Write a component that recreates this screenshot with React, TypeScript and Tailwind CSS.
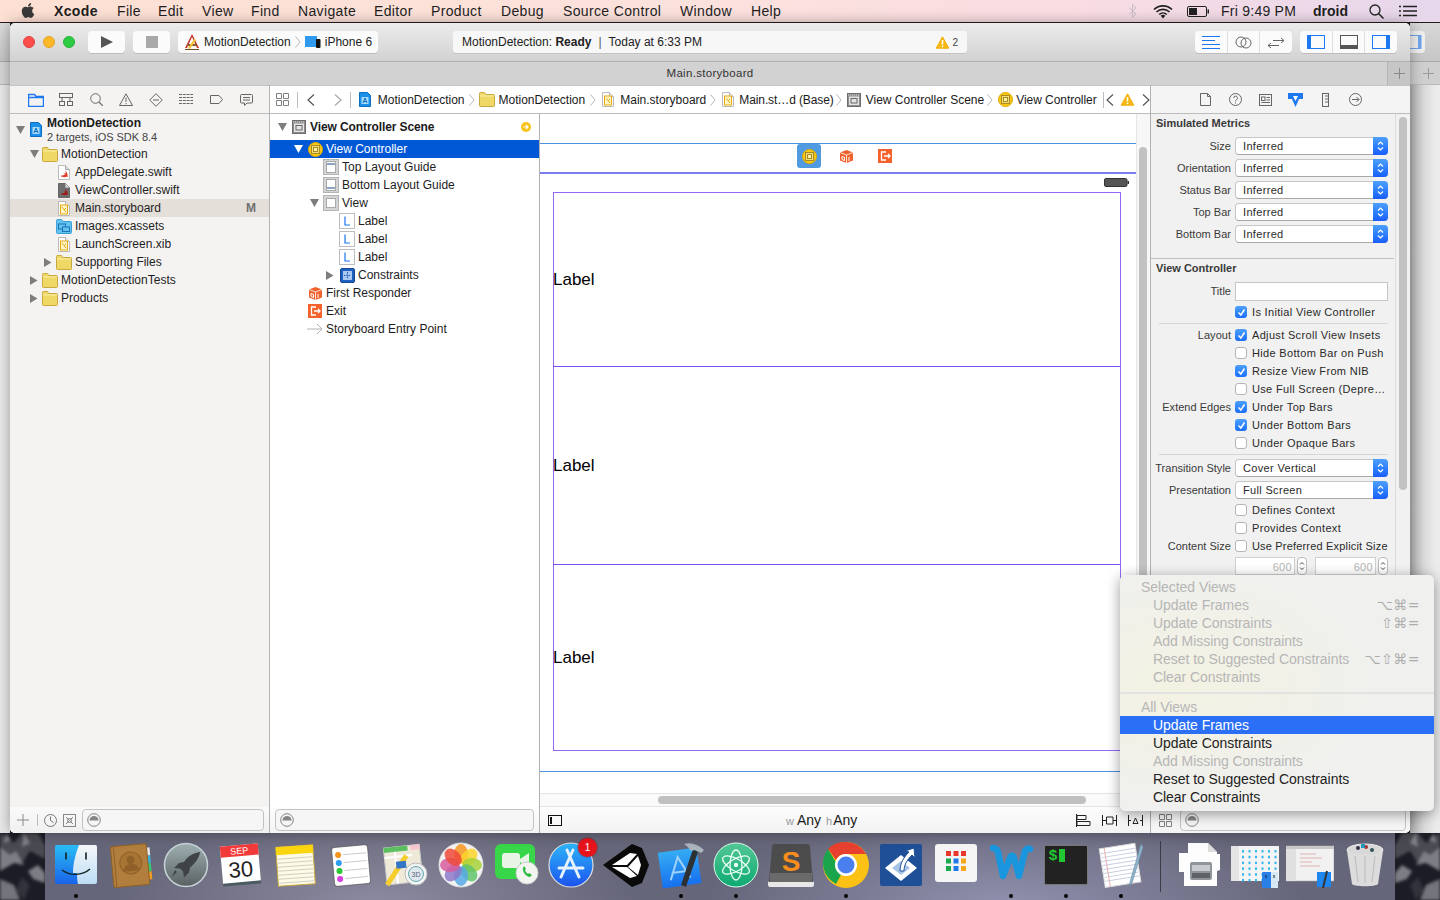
import React from "react";
import { FaApple } from "react-icons/fa";

type P = { className?: string };
const Svg = ({ w, h, vb, children, className = "" }: { w: number; h: number; vb?: string; children: React.ReactNode; className?: string }) => (
  <svg width={w} height={h} viewBox={vb ?? `0 0 ${w} ${h}`} fill="none" className={`shrink-0 ${className}`}>{children}</svg>
);

/* ---------- small file icons ---------- */
const Disc = ({ dir }: { dir?: "down" | "right" }) => (
  <div className="w-[8px] h-[8px] flex items-center justify-center shrink-0">
    {dir === "down" && <Svg w={9} h={8}><path d="M0 0h9L4.5 8z" fill="#7d7d7d" /></Svg>}
    {dir === "right" && <Svg w={8} h={9}><path d="M0 0v9l7.5-4.5z" fill="#7d7d7d" /></Svg>}
  </div>
);
const Folder = () => (
  <Svg w={16} h={15}><path d="M.5 3.500V1.500a1 1 0 0 1 1-1h4l1.500 2h7.500a1 1 0 0 1 1 1v10a1 1 0 0 1-1 1h-13a1 1 0 0 1-1-1z" fill="#efd866" stroke="#c9a93f" /><path d="M1 4h14" stroke="#fbeea8" /></Svg>
);
const BlueFolder = () => (
  <Svg w={16} h={15}><path d="M.5 3.500V1.500a1 1 0 0 1 1-1h4l1.500 2h7.500a1 1 0 0 1 1 1v10a1 1 0 0 1-1 1h-13a1 1 0 0 1-1-1z" fill="#62c3ee" stroke="#3a9fd6" /><rect x="2.500" y="5" width="7" height="5" fill="none" stroke="#1d6fb8" /><rect x="6.500" y="8" width="7" height="4.500" fill="#62c3ee" stroke="#1d6fb8" /></Svg>
);
const Swift = ({ dark }: { dark?: boolean }) => (
  <Svg w={12} h={15}><path d="M.5.5h7l4 4v10H.5z" fill={dark ? "#6f6f6f" : "#fff"} stroke={dark ? "#666" : "#bbb"} /><path d="M7.5.5v4h4" fill="#ddd" stroke="#aaa" /><path d="M2.5 11c2 1.5 5 1.5 6.500.5.5.5 1 .5 1 .5-.3-1-.5-1.500-.5-2.500 0-1.500-1-3-2.500-3.500 1 1.500.5 3 .5 3-1-.5-2-1.500-2.500-2 .5 1 1.500 2 2 2.800-1 .5-2.500.7-4.500 1.200z" fill={dark ? "#a01818" : "#e23b2a"} /></Svg>
);
const Board = () => (
  <Svg w={12} h={15}><path d="M.5.5h7l4 4v10H.5z" fill="#fff" stroke="#b9b9b9" /><path d="M7.500.5v4h4" fill="#eee" stroke="#b9b9b9" /><rect x="2.500" y="4" width="7" height="9" fill="#fff5c8" stroke="#e8a90c" /><path d="M4 6l4 5M8 7l-2 2" stroke="#e8a90c" /></Svg>
);
const ProjectIcon = () => (
  <Svg w={12} h={15}><path d="M.5.5h8l3 3v11H.5z" fill="#1a90ea" stroke="#0d6fc0" /><path d="M2.500 5h7v7h-7z" fill="#a9daf8" /><path d="M4 11l2-5 2 5M4.800 9.500h2.400" stroke="#0d6fc0" /></Svg>
);
const VCIcon = () => (
  <Svg w={15} h={15}><circle cx="7.500" cy="7.500" r="7" fill="#f8c816" stroke="#e0a800" /><rect x="3.500" y="3.500" width="8" height="8" fill="#f5df78" stroke="#a98a20" /><rect x="5.500" y="5.500" width="4" height="4" fill="#fff2a8" stroke="#a98a20" /></Svg>
);
const Cube = () => (
  <Svg w={15} h={15}><path d="M7.500 1L14 3.500v8L7.500 14 1 11.500v-8z" fill="#f2622e" /><path d="M1 3.500L7.500 6 14 3.500M7.500 6v8" stroke="#fff" strokeWidth=".8" /><path d="M10 8v4M3 7.500v3l2.500 1v-3z" stroke="#fff" strokeWidth="1" /></Svg>
);
const ExitIcon = () => (
  <Svg w={14} h={14}><rect width="14" height="14" fill="#f6622c" /><path d="M8 3H3.500v8H8M6 7h6M10 5l2 2-2 2" stroke="#fff" strokeWidth="1.300" /></Svg>
);
const SceneIcon = () => (
  <Svg w={14} h={14}><rect x=".5" y=".5" width="13" height="13" fill="#8c8c8c" stroke="#6d6d6d" /><rect x="2" y="3.500" width="10" height="8.500" fill="#e4e4e4" /><rect x="4" y="5.500" width="6" height="4.500" fill="#e4e4e4" stroke="#666" /><path d="M1 2h12" stroke="#ddd" strokeDasharray="1 1" /></Svg>
);
const GuideIcon = ({ bottom }: { bottom?: boolean }) => (
  <Svg w={16} h={16}><rect x=".5" y=".5" width="15" height="15" fill="#d4d4d4" stroke="#b5b5b5" /><rect x="3.500" y="2.500" width="9" height="11" fill="#fff" stroke="#aaa" /><path d={bottom ? "M4 11h8" : "M4 5h8"} stroke="#1c4f80" strokeWidth="1.200" /></Svg>
);
const ViewIcon = () => (
  <Svg w={16} h={16}><rect x=".5" y=".5" width="15" height="15" fill="#d4d4d4" stroke="#b5b5b5" /><rect x="3.500" y="3.500" width="9" height="9" fill="#fff" stroke="#aaa" /></Svg>
);
const LabelIcon = () => (
  <Svg w={16} h={16}><rect x=".5" y=".5" width="15" height="15" fill="#fff" stroke="#bdbdbd" /><path d="M6 3.500v8.500h5" stroke="#1877f2" strokeWidth="1.200" /></Svg>
);
const ConstraintsIcon = () => (
  <Svg w={15} h={15}><rect x=".5" y=".5" width="14" height="14" rx="1.500" fill="#1f5fbf" stroke="#164a96" /><rect x="3" y="3" width="9" height="9" fill="#a9c8f0" /><path d="M7.500 4v7M4 7.500h7" stroke="#1f5fbf" strokeDasharray="1.500 .8" /></Svg>
);
const EntryArrow = () => (
  <Svg w={16} h={12}><path d="M0 6h15M10 1l5 5-5 5" stroke="#b4b4b4" /></Svg>
);
const Warn = ({ s = 13 }: { s?: number }) => (
  <Svg w={s} h={s} vb="0 0 13 13"><path d="M6.500.8L12.800 12.200H.2z" fill="#f7b916" stroke="#f2ac05" strokeLinejoin="round" /><path d="M6.500 4v4.500" stroke="#fff" strokeWidth="1.500" /><circle cx="6.500" cy="10.300" r=".9" fill="#fff" /></Svg>
);
const Chev = ({ className = "" }: P) => (
  <Svg w={6} h={12} className={className}><path d="M.5.5L5 6 .5 11.500" stroke="#b7b7b7" /></Svg>
);

/* ---------- toolbar ---------- */
const Light = ({ c }: { c: string }) => <div className={`w-[12px] h-[12px] rounded-full border ${c}`} />;
const TbBtn = ({ className = "", children }: P & { children?: React.ReactNode }) => (
  <div className={`h-[22px] bg-[#fbfbfb] rounded-[4px] shadow-[0_1px_0_#bdbdbd] flex items-center shrink-0 ${className}`}>{children}</div>
);
const Seg = ({ children, last }: { children: React.ReactNode; last?: boolean }) => (
  <div className={`flex-1 h-full flex items-center justify-center ${last ? "" : "border-r border-[#dedede]"}`}>{children}</div>
);

/* ---------- tree rows ---------- */
const NavRow = ({ pl, dir, icon, label, hl }: { pl: string; dir?: "down" | "right"; icon: React.ReactNode; label: string; hl?: boolean }) => (
  <div className={`h-[18px] flex items-center ${pl} ${hl ? "bg-[#e5dfd9]" : ""}`}>
    <Disc dir={dir} />
    <div className="w-[16px] ml-[4px] flex justify-center shrink-0">{icon}</div>
    <span className="ml-[3px] text-[#1d1d1d]">{label}</span>
    {hl && <span className="ml-auto mr-[13px] font-bold text-[#707070]">M</span>}
  </div>
);
const OutRow = ({ pl, dir, icon, label }: { pl: string; dir?: "down" | "right"; icon: React.ReactNode; label: string }) => (
  <div className={`h-[18px] flex items-center ${pl}`}>
    <Disc dir={dir} />
    <div className="w-[16px] ml-[5px] flex justify-center shrink-0">{icon}</div>
    <span className="ml-[3px] text-[#1d1d1d]">{label}</span>
  </div>
);

/* ---------- inspector ---------- */
const Row = ({ label, children, className = "" }: { label?: string; children: React.ReactNode; className?: string }) => (
  <div className={`h-[18px] flex items-center ${className}`}>
    <div className="w-[80px] text-right text-[#3a3a3a] whitespace-nowrap tracking-[0.02px]">{label}</div>
    <div className="ml-[4px] flex items-center">{children}</div>
  </div>
);
const Select = ({ v }: { v: string }) => (
  <div className="w-[153px] h-[18px] flex bg-white rounded-[4px] border border-[#c6c6c6] border-b-[#a8a8a8]">
    <span className="flex-1 pl-[7px] leading-[16px] text-[#2a2a2a]">{v}</span>
    <div className="-my-px -mr-px w-[15px] rounded-r-[4px] bg-gradient-to-b from-[#4da0fb] to-[#1b5cfb] flex items-center justify-center">
      <Svg w={7} h={12}><path d="M1 4.500L3.500 2 6 4.500M1 7.500L3.500 10 6 7.500" stroke="#fff" strokeWidth="1.200" /></Svg>
    </div>
  </div>
);
const Check = ({ on, label, tight }: { on?: boolean; label: string; tight?: boolean }) => (
  <div className="flex items-center">
    {on ? (
      <div className="w-[12px] h-[12px] rounded-[3px] bg-gradient-to-b from-[#4da0fb] to-[#1b6efb] flex items-center justify-center">
        <Svg w={9} h={9}><path d="M1.500 4.500L3.800 7 7.500 1.500" stroke="#fff" strokeWidth="1.500" /></Svg>
      </div>
    ) : (
      <div className="w-[12px] h-[12px] rounded-[3px] bg-white border border-[#b5b5b5]" />
    )}
    <span className={`ml-[5px] text-[#2a2a2a] whitespace-nowrap ${tight ? "tracking-[0.18px]" : ""}`}>{label}</span>
  </div>
);
const Stepper = () => (
  <div className="w-[10px] h-[18px] rounded-[4px] bg-white border border-[#bbb] flex items-center justify-center">
    <Svg w={6} h={12}><path d="M1 4.500L3 2.500l2 2M1 7.500l2 2 2-2" stroke="#444" /></Svg>
  </div>
);
const Filter = ({ className = "" }: P) => (
  <div className={`h-[22px] rounded-[4px] border border-[#c2c2c2] bg-[#f6f6f6] flex items-center pl-[4px] ${className}`}>
    <FilterGlyph />
  </div>
);
const FilterGlyph = () => (
  <Svg w={14} h={14}><circle cx="7" cy="7" r="6.300" stroke="#858585" /><path d="M2.500 7.500a4.500 4.500 0 0 1 9 0z" fill="#858585" /></Svg>
);
const GridGlyph = () => (
  <Svg w={13} h={13}><path d="M.5.5h5v5h-5zM7.500.5h5v5h-5zM.5 7.500h5v5h-5zM7.500 7.500h5v5h-5z" stroke="#808080" /></Svg>
);

/* ---------- dock ---------- */
const Finder = () => (
  <Svg w={48} h={48}>
    <defs><linearGradient id="fa" x1="0" y1="0" x2="0" y2="1"><stop stopColor="#29bdf6" /><stop offset="1" stopColor="#1a63e8" /></linearGradient>
      <linearGradient id="fb" x1="0" y1="0" x2="0" y2="1"><stop stopColor="#f6f8fa" /><stop offset="1" stopColor="#bcdcf5" /></linearGradient></defs>
    <rect x="3" y="4" width="42" height="39" rx="2" fill="url(#fa)" />
    <path d="M27 4h16a2 2 0 0 1 2 2v35a2 2 0 0 1-2 2H26c-1-4-1-8-1-11h-4c0-10 3-20 6-28z" fill="url(#fb)" />
    <path d="M14 12v6M34 12v6" stroke="#122" strokeWidth="1.600" strokeLinecap="round" />
    <path d="M10 29c8 6 20 6 28-1" stroke="#122" strokeWidth="1.400" />
  </Svg>
);
const Contacts = () => (
  <Svg w={48} h={48}>
    <g transform="rotate(-5 24 24)">
      <rect x="40" y="8" width="4" height="8" fill="#e6e6e6" /><rect x="40" y="16" width="4" height="8" fill="#3bb0d8" /><rect x="40" y="24" width="4" height="8" fill="#3dc26c" /><rect x="40" y="32" width="4" height="8" fill="#f09a24" />
      <rect x="5" y="4" width="36" height="41" rx="2" fill="#b17e3e" stroke="#8f6128" />
      <path d="M8 4.500v40" stroke="#8f6128" />
      <circle cx="24" cy="22" r="11" fill="#a87434" stroke="#8f6128" />
      <circle cx="24" cy="19" r="4" fill="#8f6128" /><path d="M16 30c1-6 4-7 8-7s7 1 8 7" fill="#8f6128" />
    </g>
  </Svg>
);
const Launchpad = () => (
  <Svg w={48} h={48}>
    <defs><linearGradient id="lp" x1="0" y1="0" x2="0" y2="1"><stop stopColor="#9fb0b2" /><stop offset="1" stopColor="#596062" /></linearGradient></defs>
    <circle cx="24" cy="24" r="21.500" fill="url(#lp)" stroke="#c6d4d6" strokeWidth="1.500" />
    <path d="M38 11c-7 1-12 4-16 10l-5 1-5 5 6 .5 3 3 1 6 5-5 1-5c5-4 9-9 10-15z" fill="#3f4345" />
    <path d="M15 31l-5 5 3-7z" fill="#3f4345" />
  </Svg>
);
const Calendar = () => (
  <Svg w={48} h={48}>
    <g transform="rotate(-5 24 24)">
      <rect x="4.500" y="6" width="38" height="38" fill="#4a5a60" />
      <rect x="4.500" y="4" width="38" height="37" fill="#fff" />
      <rect x="4.500" y="4" width="38" height="11" fill="#f23a3a" />
      <text x="23.500" y="13" textAnchor="middle" fontSize="9" fill="#fff" fontFamily="Liberation Sans">SEP</text>
      <text x="23.500" y="36" textAnchor="middle" fontSize="22" fill="#222" fontFamily="Liberation Sans">30</text>
    </g>
  </Svg>
);
const Notes = () => (
  <Svg w={48} h={48}>
    <g transform="rotate(-4 24 24)">
      <rect x="5" y="5" width="37" height="39" fill="#fdfbe6" stroke="#c9a83c" />
      <rect x="5" y="5" width="37" height="8" fill="#fbd50f" />
      {[17, 21, 25, 29, 33, 37, 41].map((y) => <path key={y} d={`M6 ${y}h35`} stroke="#cfcfc6" />)}
    </g>
  </Svg>
);
const Reminders = () => (
  <Svg w={48} h={48}>
    <g transform="rotate(-5 24 24)">
      <rect x="6" y="5" width="36" height="39" rx="3" fill="#fff" stroke="#444" strokeOpacity=".6" />
      {[["#f7941e", 13], ["#2d9df4", 21], ["#2bc834", 29], ["#d73ee0", 37]].map(([c, y]) => (
        <g key={String(y)}><circle cx="12" cy={y as number} r="3" fill={c as string} /><path d={`M17 ${y}h23`} stroke="#ccc" /></g>
      ))}
    </g>
  </Svg>
);
const Maps = () => (
  <Svg w={48} h={48}>
    <g transform="rotate(-6 22 22)">
      <rect x="3" y="5" width="36" height="37" fill="#efe9d8" stroke="#ccc" />
      <rect x="3" y="5" width="24" height="5" fill="#5cc060" />
      <rect x="30" y="5" width="9" height="5" fill="#f8c8d0" />
      <path d="M3 15h28M14 10v32" stroke="#fff" strokeWidth="2" />
      <path d="M3 42L25 15" stroke="#f5cd2c" strokeWidth="5" />
      <rect x="14" y="20" width="10" height="7" fill="#3575c8" />
    </g>
    <circle cx="34" cy="33" r="11" fill="#f3f5f5" stroke="#bbb" />
    <circle cx="34" cy="33" r="7.500" fill="#dfe8ee" stroke="#6aa" />
    <text x="34" y="36" textAnchor="middle" fontSize="7" fill="#567" fontFamily="Liberation Sans">3D</text>
  </Svg>
);
const Photos = () => {
  const cs = ["#f7941e", "#fbd42a", "#a7d238", "#5fc46a", "#57a9e6", "#8e77c8", "#d85c9e", "#ee4a3a"];
  return (
    <Svg w={48} h={48}>
      <circle cx="24" cy="24" r="22" fill="#f4f4f4" stroke="#ddd" />
      {cs.map((c, i) => <ellipse key={c} cx="24" cy="13" rx="7" ry="10" fill={c} opacity=".85" transform={`rotate(${i * 45} 24 24)`} />)}
      <circle cx="24" cy="24" r="1.500" fill="#fff" />
    </Svg>
  );
};
const FaceTime = () => (
  <Svg w={48} h={48}>
    <rect x="3" y="3" width="40" height="35" rx="6" fill="#38d649" />
    <rect x="10" y="12" width="18" height="15" rx="3" fill="#e8f5e6" />
    <path d="M28 18l9-6v15l-9-6z" fill="#e8f5e6" />
    <circle cx="35" cy="32" r="11" fill="#f2f5f0" stroke="#ccc" />
    <path d="M31 27c-1 3 3 9 7 9l2-2-3-2-1 1c-1-.5-3-3-3-4l1-1-2-3z" fill="#2cbb40" />
  </Svg>
);
const AppStore = () => (
  <Svg w={48} h={48}>
    <defs><linearGradient id="as" x1="0" y1="0" x2="0" y2="1"><stop stopColor="#2db6f8" /><stop offset="1" stopColor="#1b52ee" /></linearGradient></defs>
    <circle cx="24" cy="24" r="22" fill="url(#as)" stroke="#ddd" strokeWidth="1.200" />
    <path d="M26 9l-12 27M20 9l12 27M12 27h24" stroke="#e6f2fd" strokeWidth="3" strokeLinecap="round" />
  </Svg>
);
const Unity = () => (
  <Svg w={48} h={48}>
    <path d="M1 24L30 3l10 4 7 17-7 18-10 4z" fill="#0a0a0a" />
    <path d="M10 24l18-12 7 1-10 11zM26 26l10-11 3 9-3 10z M10 26h15l10 9-7 2z" fill="#fff" />
  </Svg>
);
const XcodeIcon = () => (
  <Svg w={48} h={48}>
    <defs><linearGradient id="xc" x1="0" y1="0" x2="0" y2="1"><stop stopColor="#35acf4" /><stop offset="1" stopColor="#1670ef" /></linearGradient></defs>
    <g transform="rotate(-8 22 26)"><rect x="3" y="9" width="39" height="36" fill="url(#xc)" />
      <path d="M12 38L22 16l10 22M14 31h17" stroke="#9fd2fa" strokeWidth="2" /></g>
    <path d="M36 8L24 44l5 2L41 11z" fill="#2c3136" />
    <path d="M27 3c6-2 14 0 20 6l-3 3-6-3-4 1c-2-3-4-5-7-7z" fill="#a9b4bb" />
  </Svg>
);
const Atom = () => (
  <Svg w={48} h={48}>
    <defs><linearGradient id="at" x1="0" y1="0" x2="0" y2="1"><stop stopColor="#53c796" /><stop offset="1" stopColor="#0eaa72" /></linearGradient></defs>
    <circle cx="24" cy="24" r="22" fill="url(#at)" stroke="#dfe" strokeWidth="1" />
    <g stroke="#eafff5" strokeWidth="1.300" fill="none">
      <ellipse cx="24" cy="24" rx="15" ry="6" transform="rotate(30 24 24)" />
      <ellipse cx="24" cy="24" rx="15" ry="6" transform="rotate(-30 24 24)" />
      <ellipse cx="24" cy="24" rx="15" ry="6" transform="rotate(90 24 24)" />
    </g>
    <circle cx="24" cy="24" r="2.200" fill="#eafff5" />
  </Svg>
);
const Sublime = () => (
  <Svg w={48} h={48}>
    <rect x="1" y="40" width="46" height="6" rx="2" fill="#e8e8e8" />
    <path d="M5 6a3 3 0 0 1 3-3h32a3 3 0 0 1 3 3l3 35H2z" fill="#4c4c4c" />
    <rect x="3" y="32" width="42" height="9" fill="#6a6a6a" />
    <text x="24" y="30" textAnchor="middle" fontSize="28" fontWeight="700" fill="#f98e1c" fontFamily="Liberation Sans">S</text>
  </Svg>
);
const Chrome = () => (
  <Svg w={48} h={48}>
    <circle cx="24" cy="24" r="23" fill="#fbc115" />
    <path d="M24 1a23 23 0 0 1 20 12H24a11 11 0 0 0-10 6L6 8A23 23 0 0 1 24 1z" fill="#e8402f" />
    <path d="M6 8l9 15c1 3 3 6 6 7l-7 13A23 23 0 0 1 6 8z" fill="#1aa54d" />
    <circle cx="24" cy="24" r="11" fill="#fff" />
    <circle cx="24" cy="24" r="8.500" fill="#4a7ff0" />
  </Svg>
);
const BlueApp = () => (
  <Svg w={48} h={48}>
    <rect x="3" y="3" width="42" height="42" rx="2" fill="#1f4f96" />
    <path d="M24 14L8 27l16 13 16-13z" fill="#fff" />
    <path d="M24 20l-9 7 9 7 9-7z" fill="#a8c4e6" />
    <path d="M23 30c0-8 4-14 9-19l-4-1 9-3 1 10-3-3c-4 4-8 9-8 16z" fill="#fff" stroke="#1f4f96" />
  </Svg>
);
const GridApp = () => {
  const cols = ["#e8392c", "#e8392c", "#e8392c", "#1ba94c", "#1f7ae8", "#f7a51a", "#1ba94c", "#1f7ae8", "#f7a51a"];
  return (
    <Svg w={48} h={48}>
      <rect x="3" y="3" width="42" height="38" rx="3" fill="#f5f5f5" />
      {cols.map((c, i) => <rect key={i} x={14 + (i % 3) * 7.500} y={10 + Math.floor(i / 3) * 7.500} width="5" height="5" fill={c} />)}
    </Svg>
  );
};
const Word = () => (
  <Svg w={48} h={48}>
    <path d="M6 7c2 0 4 1 5 4l5 24 7-18c1-3 3-3 4 0l5 18 6-25c1-2 3-3 5-2" stroke="#1996dd" strokeWidth="6.500" strokeLinecap="round" strokeLinejoin="round" />
  </Svg>
);
const Terminal = () => (
  <div className="w-[44px] h-[40px] mt-[4px] rounded-[2px] bg-[#222] border border-[#777] flex items-start pl-[4px] pt-[3px]">
    <span className="text-[#21c733] text-[15px] font-bold leading-[15px] font-['Liberation_Mono',monospace]">$</span>
    <span className="w-[6px] h-[13px] bg-[#21c733] ml-px" />
  </div>
);
const TextEdit = () => (
  <Svg w={48} h={48}>
    <g transform="rotate(-9 22 24)">
      <rect x="5" y="5" width="36" height="39" fill="#fff" stroke="#ddd" />
      {[10, 14, 18, 22, 26, 30, 34, 38].map((y) => <path key={y} d={`M6 ${y}h34`} stroke="#c5cfe0" />)}
      <path d="M10 5v39" stroke="#f0b0b0" />
    </g>
    <path d="M44 3l-11 38-1 4 3-3L46 6z" fill="#8fb5d0" stroke="#6a8aa0" strokeWidth=".6" />
  </Svg>
);
const DriveDoc = () => (
  <Svg w={48} h={48}>
    <path d="M12 2h20l9 9v2h3v16l-3 1v15H8V31H3V12h9z" fill="#fdfdfd" />
    <path d="M32 2v9h9z" fill="#ddd" />
    <rect x="14" y="21" width="22" height="18" rx="2" fill="#8f9598" />
    <rect x="16" y="24" width="18" height="6" fill="#c8cccf" />
    <rect x="16" y="32" width="18" height="5" fill="#5e6366" />
  </Svg>
);
const FolderThumb = () => {
  const dots: React.ReactNode[] = [];
  for (let r = 0; r < 6; r++) for (let c = 0; c < 6; c++) dots.push(<rect key={`${r}-${c}`} x={11 + c * 6.500} y={9 + r * 5.800} width="2" height="2.500" fill="#35b8f0" />);
  return (
    <Svg w={48} h={48}>
      <rect y="5" width="48" height="35" fill="#f4f4f4" />
      <rect y="5" width="8" height="35" fill="#e4e4e4" />
      {dots}
      <rect x="31" y="31" width="16" height="16" rx="1" fill="#2b80e8" />
      <rect x="40" y="31" width="7" height="16" fill="#d8e8f2" />
      <path d="M35 34v3M43 34v3" stroke="#123" />
    </Svg>
  );
};
const ShotThumb = () => (
  <Svg w={48} h={48}>
    <rect y="5" width="48" height="35" fill="#f1f1f1" stroke="#aaa" strokeWidth=".6" />
    <rect y="5" width="48" height="3" fill="#c8c8c8" />
    <rect y="8" width="10" height="32" fill="#e0e0e0" />
    <path d="M14 13h16M14 17h22M14 21h12M14 25h20" stroke="#d99" strokeWidth=".7" />
    <rect x="31" y="31" width="14" height="15" fill="#1f86ee" />
    <path d="M41 30l-4 17" stroke="#333" strokeWidth="2" />
  </Svg>
);
const Trash = () => (
  <Svg w={48} h={48}>
    <ellipse cx="24" cy="9" rx="18" ry="6" fill="#d8d8d8" stroke="#f0f0f0" />
    <circle cx="17" cy="7" r="2" fill="#334" /><circle cx="25" cy="6" r="2" fill="#a33" /><circle cx="31" cy="9" r="2" fill="#355" /><rect x="20" y="3" width="4" height="4" fill="#29b" />
    <path d="M6 10c3 4 33 4 36 0l-5 33c-2 3-24 3-26 0z" fill="#dcdcdc" />
    <path d="M14 15l3 26M24 15v27M34 15l-3 26" stroke="#bcbcbc" />
  </Svg>
);

const DockItem = ({ children, dot, badge }: { children: React.ReactNode; dot?: boolean; badge?: string }) => (
  <div className="w-[55px] h-[67px] relative flex flex-col items-center shrink-0">
    <div className="mt-[8px] w-[48px] h-[48px] flex justify-center">{children}</div>
    {dot && <div className="mt-auto mb-[2px] w-[4px] h-[4px] rounded-full bg-black" />}
    {badge && <div className="absolute top-[5px] left-[35px] w-[19px] h-[19px] rounded-full bg-[#e8141c] text-white text-[10px] leading-[19px] text-center shadow-[0_0_0_1px_rgba(120,0,0,0.25)]">{badge}</div>}
  </div>
);

const Mountain = ({ flip }: { flip?: boolean }) => (
  <Svg w={45} h={67} className={flip ? "-scale-x-100" : ""}>
    <rect width="45" height="67" fill="#1c1c26" />
    <g className="blur-[1.5px]">
      <path d="M0 0l14 10 8-10h16l7 12v14L30 18 22 30 10 22 0 30z" fill="#4a4a52" />
      <path d="M0 14l10 8 6-4 8 14-10-2-14 8zM28 38l10-6 7 8v10l-12-4z" fill="#7d7d84" />
      <path d="M0 46l14 6 6 15H0zM24 0l6 10-8 4zM6 0l5 7-7 3z" fill="#9a9aa0" opacity=".7" />
      <path d="M22 44l8 8-6 15-8-10z" fill="#33333c" />
    </g>
  </Svg>
);

const menus: [string, string][] = [
  ["File", "w-[41px]"], ["Edit", "w-[44px]"], ["View", "w-[49px]"], ["Find", "w-[47px]"], ["Navigate", "w-[76px]"],
  ["Editor", "w-[57px]"], ["Product", "w-[70px]"], ["Debug", "w-[62px]"], ["Source Control", "w-[117px]"], ["Window", "w-[71px]"], ["Help", "w-[50px]"],
];

export default function App() {
  return (
    <div className="w-[1440px] h-[900px] relative overflow-hidden flex flex-col bg-[#1c1c26] font-['Liberation_Sans',sans-serif] text-[12px]">
      {/* menu bar */}
      <div className="h-[23px] shrink-0 flex items-center text-[14px] tracking-[0.35px] text-[#1f1f1f] border-b border-[#2a1c1c] bg-[linear-gradient(90deg,#fde0d3_0%,#fce2dc_45%,#f9dde3_75%,#e6d7ec_100%)]">
        <FaApple className="ml-[20px] w-[16px] h-[17px] text-[#3a3a3a] -mt-[2px] shrink-0" />
        <span className="ml-[18px] w-[63px] font-bold">Xcode</span>
        {menus.map(([m, w]) => <span key={m} className={`${w} whitespace-nowrap`}>{m}</span>)}
        <div className="ml-auto flex items-center">
          <Svg w={9} h={14} className="mr-[16px]"><path d="M1 3.500L8 10l-3.500 3.500V.500L8 4 1 10.500" stroke="#c9bcc6" /></Svg>
          <Svg w={20} h={15} className="mr-[14px]"><path d="M1 5.500a13 13 0 0 1 18 0M3.500 8a9.500 9.500 0 0 1 13 0M6.200 10.500a5.500 5.500 0 0 1 7.600 0" stroke="#222" strokeWidth="1.700" /><path d="M10 14.500l2.300-2.700a3 3 0 0 0-4.600 0z" fill="#222" /></Svg>
          <Svg w={22} h={11} className="mr-[12px]"><rect x=".5" y=".5" width="19" height="10" rx="1.500" stroke="#222" /><rect x="2" y="2" width="8" height="7" fill="#222" /><rect x="20.500" y="3.500" width="1.500" height="4" fill="#222" /></Svg>
          <span className="w-[92px] whitespace-nowrap tracking-[0.25px]">Fri 9:49 PM</span>
          <span className="w-[56px] font-bold tracking-normal">droid</span>
          <Svg w={15} h={15} className="mr-[15px]"><circle cx="6" cy="6" r="5" stroke="#222" strokeWidth="1.300" /><path d="M9.500 9.500L14.500 14.500" stroke="#222" strokeWidth="1.500" /></Svg>
          <Svg w={18} h={12} className="mr-[23px]"><path d="M4 1.500h14M4 6h14M4 10.500h14" stroke="#222" strokeWidth="1.500" /><path d="M0 1.500h2M0 6h2M0 10.500h2" stroke="#222" strokeWidth="1.500" /></Svg>
        </div>
      </div>

      {/* windows row */}
      <div className="h-[810px] shrink-0 flex bg-[#1c1c26]">
        {/* left window behind */}
        <div className="w-[10px] shrink-0 flex flex-col">
          <div className="h-[39px] bg-gradient-to-b from-[#dcdcdc] to-[#c4c4c4] border-b border-[#aaaaaa]" />
          <div className="h-[23px] bg-[#d6d6d6] border-b border-[#b5b5b5]" />
          <div className="flex-1 bg-[#e9e9e9]" />
        </div>

        {/* main window */}
        <div className="w-[1400px] shrink-0 flex flex-col rounded-t-[5px] rounded-b-[5px] overflow-hidden bg-white shadow-[0_0_14px_rgba(0,0,0,0.35)] relative z-10">
          {/* toolbar */}
          <div className="h-[39px] shrink-0 flex items-center pl-[13px] pr-[13px] bg-gradient-to-b from-[#ececec] to-[#d2d2d2] border-b border-[#b1b1b1]">
            <div className="flex gap-[8px]">
              <Light c="bg-[#fc4e4a] border-[#e0433f]" />
              <Light c="bg-[#fdb82a] border-[#e3a324]" />
              <Light c="bg-[#2ccb42] border-[#27b33a]" />
            </div>
            <TbBtn className="ml-[13px] w-[37px] justify-center">
              <Svg w={12} h={12}><path d="M0 0l12 6-12 6z" fill="#555" /></Svg>
            </TbBtn>
            <TbBtn className="ml-[8px] w-[37px] justify-center"><div className="w-[12px] h-[12px] bg-[#a9a9a9]" /></TbBtn>
            <TbBtn className="ml-[8px] w-[200px] pl-[6px]">
              <Svg w={16} h={16}><path d="M8 0L1 14h2l5-11 5 11h2z" fill="#c7332a" /><path d="M3 11h10" stroke="#8a5a2c" strokeWidth="2" /><path d="M4 14l6-9 2 1-6 9z" fill="#f2c43a" /><path d="M1 15.500h14" stroke="#6f4a22" /></Svg>
              <span className="ml-[4px] text-[#222]">MotionDetection</span>
              <Chev className="ml-[4px]" />
              <Svg w={16} h={14} className="ml-[4px]"><rect x="0" y="1" width="12" height="11" fill="#2e9af0" /><rect x="11" y="4" width="4.500" height="9" rx="1" fill="#111" /></Svg>
              <span className="ml-[4px] text-[#222] whitespace-nowrap">iPhone 6</span>
            </TbBtn>
            <div className="ml-[75px] w-[514px] h-[22px] shrink-0 bg-[#f7f7f7] rounded-[3px] shadow-[0_1px_0_#c4c4c4] flex items-center pl-[9px] pr-[9px] text-[#222]">
              <span className="whitespace-nowrap">MotionDetection: <b>Ready</b></span>
              <span className="mx-[7px] text-[#555]">|</span>
              <span className="whitespace-nowrap">Today at 6:33 PM</span>
              <div className="ml-auto"><Warn /></div>
              <span className="ml-[3px] text-[10px] text-[#444]">2</span>
            </div>
            <TbBtn className="ml-auto w-[97px]">
              <Seg><Svg w={18} h={13}><path d="M0 .5h18M0 4.500h13M0 8.500h18M0 12.500h18" stroke="#1e78f0" /></Svg></Seg>
              <Seg><Svg w={17} h={13}><circle cx="6" cy="6" r="5" stroke="#666" /><circle cx="11" cy="7" r="5" stroke="#666" /></Svg></Seg>
              <Seg last><Svg w={18} h={11}><path d="M17 3.500H6M14 1l3 2.500L14 6" stroke="#666" /><path d="M1 8.500h11M4 6L1 8.500 4 11" stroke="#666" /></Svg></Seg>
            </TbBtn>
            <TbBtn className="ml-[8px] w-[97px]">
              <Seg><Svg w={18} h={14}><rect x=".5" y=".5" width="17" height="13" stroke="#1e78f0" /><rect x="1" y="1" width="3" height="12" fill="#1e78f0" /></Svg></Seg>
              <Seg><Svg w={18} h={14}><rect x=".5" y=".5" width="17" height="13" stroke="#555" /><rect x="1" y="10" width="16" height="3" fill="#555" /></Svg></Seg>
              <Seg last><Svg w={18} h={14}><rect x=".5" y=".5" width="17" height="13" stroke="#1e78f0" /><rect x="14" y="1" width="3" height="12" fill="#1e78f0" /></Svg></Seg>
            </TbBtn>
          </div>

          {/* tab bar */}
          <div className="h-[23px] shrink-0 bg-[#d2d2d2] flex items-center relative">
            <span className="flex-1 text-center text-[#333] text-[11.500px] tracking-[0.3px]">Main.storyboard</span>
            <div className="absolute right-0 top-0 w-[23px] h-[23px] bg-[#c6c6c6] border-l border-[#b5b5b5] flex items-center justify-center">
              <Svg w={11} h={11}><path d="M5.500 0v11M0 5.500h11" stroke="#8a8a8a" /></Svg>
            </div>
          </div>

          {/* body */}
          <div className="flex-1 flex min-h-0">
            {/* navigator */}
            <div className="w-[260px] shrink-0 flex flex-col border-r border-[#b2b2b2] bg-[#f5f3f2]">
              <div className="h-[29px] shrink-0 flex items-center pl-[11px] border-y border-[#bcbcbc] border-t-[#c4c4c4]">
                {[
                  <Svg key="a" w={16} h={14}><path d="M.5 13.500V1.500h6l1.500 2h7.500v10z" stroke="#1e78f0" strokeWidth="1.500" /><path d="M1 4.500h14" stroke="#1e78f0" strokeWidth="1.500" /></Svg>,
                  <Svg key="b" w={14} h={13}><rect x=".5" y=".5" width="13" height="4" stroke="#666" /><rect x=".5" y="8.500" width="5" height="4" stroke="#666" /><rect x="8.500" y="8.500" width="5" height="4" stroke="#666" /><path d="M3 4.500v4M11 4.500v4" stroke="#666" /></Svg>,
                  <Svg key="c" w={13} h={13}><circle cx="5.500" cy="5.500" r="4.800" stroke="#666" /><path d="M9 9l4 4" stroke="#666" strokeWidth="1.200" /></Svg>,
                  <Svg key="d" w={14} h={13}><path d="M7 .8L13.500 12.500H.5z" stroke="#666" /><path d="M7 4.500v4.500M7 10v1.200" stroke="#666" /></Svg>,
                  <Svg key="e" w={14} h={14}><path d="M7 .7L13.300 7 7 13.300.7 7z" stroke="#666" strokeLinejoin="round" /><path d="M4 7h6" stroke="#666" /></Svg>,
                  <Svg key="f" w={14} h={11}><path d="M0 .5h14M0 3.500h14M0 6.500h14M0 9.500h14" stroke="#666" strokeDasharray="3 .8" /></Svg>,
                  <Svg key="g" w={13} h={9}><path d="M.5.5h8.500L12.500 4.500 9 8.500H.5z" stroke="#666" /></Svg>,
                  <Svg key="h" w={13} h={12}><path d="M.5 1.500a1 1 0 0 1 1-1h10a1 1 0 0 1 1 1v6.500a1 1 0 0 1-1 1H7l-2.500 2.500V9h-3a1 1 0 0 1-1-1z" stroke="#666" /><path d="M3 3.500h7M3 6h7" stroke="#666" /></Svg>,
                ].map((ic, i) => <div key={i} className="w-[30px] flex justify-center">{ic}</div>)}
              </div>
              <div className="flex-1 min-h-0">
                <div className="h-[31px] flex items-center pl-[6px]">
                  <Disc dir="down" />
                  <div className="ml-[6px]"><ProjectIcon /></div>
                  <div className="ml-[5px] leading-[14px]">
                    <div className="font-bold text-[#1a1a1a]">MotionDetection</div>
                    <div className="text-[11px] text-[#444] tracking-[-0.05px]">2 targets, iOS SDK 8.4</div>
                  </div>
                </div>
                <NavRow pl="pl-[20px]" dir="down" icon={<Folder />} label="MotionDetection" />
                <NavRow pl="pl-[34px]" icon={<Swift />} label="AppDelegate.swift" />
                <NavRow pl="pl-[34px]" icon={<Swift dark />} label="ViewController.swift" />
                <NavRow pl="pl-[34px]" icon={<Board />} label="Main.storyboard" hl />
                <NavRow pl="pl-[34px]" icon={<BlueFolder />} label="Images.xcassets" />
                <NavRow pl="pl-[34px]" icon={<Board />} label="LaunchScreen.xib" />
                <NavRow pl="pl-[34px]" dir="right" icon={<Folder />} label="Supporting Files" />
                <NavRow pl="pl-[20px]" dir="right" icon={<Folder />} label="MotionDetectionTests" />
                <NavRow pl="pl-[20px]" dir="right" icon={<Folder />} label="Products" />
              </div>
              <div className="h-[26px] shrink-0 flex items-center bg-gradient-to-b from-[#fafafa] to-[#f0f0f0] pl-[7px]">
                <Svg w={12} h={12}><path d="M6 0v12M0 6h12" stroke="#888" /></Svg>
                <div className="ml-[8px] w-px h-[12px] bg-[#bbb]" />
                <Svg w={13} h={13} className="ml-[6px]"><circle cx="6.500" cy="6.500" r="6" stroke="#777" /><path d="M6.500 2.500v4l3 2" stroke="#777" /></Svg>
                <Svg w={13} h={13} className="ml-[6px]"><rect x=".5" y=".5" width="12" height="12" stroke="#888" /><path d="M3 3l7 7M10 3l-7 7" stroke="#888" /><circle cx="6.500" cy="6.500" r="2" stroke="#888" /></Svg>
                <Filter className="ml-[6px] w-[182px]" />
              </div>
            </div>

            {/* editor */}
            <div className="w-[880px] shrink-0 flex flex-col">
              {/* jump bar */}
              <div className="h-[29px] shrink-0 flex items-center bg-white border-y border-[#bcbcbc] border-t-[#c4c4c4] pl-[6px] whitespace-nowrap text-[#1a1a1a]">
                <GridGlyph />
                <div className="ml-[8px] w-px h-[16px] bg-[#bbb]" />
                <Svg w={8} h={12} className="ml-[10px]"><path d="M7 .5L1 6l6 5.500" stroke="#555" strokeWidth="1.200" /></Svg>
                <Svg w={8} h={12} className="ml-[19px]"><path d="M1 .5L7 6l-6 5.500" stroke="#aaa" strokeWidth="1.200" /></Svg>
                <div className="ml-[8px] w-px h-[16px] bg-[#bbb]" />
                <div className="ml-[8px]"><ProjectIcon /></div>
                <span className="ml-[7px]">MotionDetection</span>
                <Chev className="ml-[4px]" />
                <div className="ml-[4px]"><Folder /></div>
                <span className="ml-[4px]">MotionDetection</span>
                <Chev className="ml-[5px]" />
                <div className="ml-[6px]"><Board /></div>
                <span className="ml-[6px]">Main.storyboard</span>
                <Chev className="ml-[4px]" />
                <div className="ml-[6px]"><Board /></div>
                <span className="ml-[5px] tracking-[-0.1px]">Main.st…d (Base)</span>
                <Chev className="ml-[2px]" />
                <div className="ml-[5px]"><SceneIcon /></div>
                <span className="ml-[5px]">View Controller Scene</span>
                <Chev className="ml-[3px]" />
                <div className="ml-[5px]"><VCIcon /></div>
                <span className="ml-[3px] tracking-[-0.05px]">View Controller</span>
                <div className="ml-[6px] w-px h-[16px] bg-[#bbb]" />
                <Svg w={8} h={12} className="ml-[3px]"><path d="M7 .5L1 6l6 5.500" stroke="#555" strokeWidth="1.200" /></Svg>
                <div className="ml-[7px]"><Warn /></div>
                <Svg w={8} h={12} className="ml-[8px]"><path d="M1 .5L7 6l-6 5.500" stroke="#555" strokeWidth="1.200" /></Svg>
              </div>

              <div className="flex-1 flex min-h-0">
                {/* outline */}
                <div className="w-[270px] shrink-0 flex flex-col border-r border-[#b2b2b2]">
                  <div className="flex-1 min-h-0">
                    <div className="h-[26px] flex items-center pl-[8px]">
                      <Disc dir="down" />
                      <div className="w-[16px] ml-[5px] flex justify-center"><SceneIcon /></div>
                      <span className="ml-[3px] font-bold text-[#1a1a1a] tracking-[-0.1px]">View Controller Scene</span>
                      <Svg w={10} h={10} className="ml-auto mr-[8px]"><circle cx="5" cy="5" r="5" fill="#f8c41a" /><path d="M2.500 5h4M5 3l2 2-2 2" stroke="#fff" strokeWidth="1.200" /></Svg>
                    </div>
                    <div className="h-[18px] flex items-center pl-[24px] bg-[#0058d6]">
                      <Svg w={9} h={8}><path d="M0 0h9L4.500 8z" fill="#fff" /></Svg>
                      <div className="w-[16px] ml-[4px] flex justify-center"><VCIcon /></div>
                      <span className="ml-[3px] text-white">View Controller</span>
                    </div>
                    <OutRow pl="pl-[40px]" icon={<GuideIcon />} label="Top Layout Guide" />
                    <OutRow pl="pl-[40px]" icon={<GuideIcon bottom />} label="Bottom Layout Guide" />
                    <OutRow pl="pl-[40px]" dir="down" icon={<ViewIcon />} label="View" />
                    <OutRow pl="pl-[56px]" icon={<LabelIcon />} label="Label" />
                    <OutRow pl="pl-[56px]" icon={<LabelIcon />} label="Label" />
                    <OutRow pl="pl-[56px]" icon={<LabelIcon />} label="Label" />
                    <OutRow pl="pl-[56px]" dir="right" icon={<ConstraintsIcon />} label="Constraints" />
                    <OutRow pl="pl-[24px]" icon={<Cube />} label="First Responder" />
                    <OutRow pl="pl-[24px]" icon={<ExitIcon />} label="Exit" />
                    <OutRow pl="pl-[24px]" icon={<EntryArrow />} label="Storyboard Entry Point" />
                  </div>
                  <div className="h-[26px] shrink-0 flex items-center pl-[5px] bg-gradient-to-b from-[#fdfdfd] to-[#f4f4f4]">
                    <Filter className="w-[259px]" />
                  </div>
                </div>

                {/* canvas */}
                <div className="flex-1 flex flex-col min-w-0">
                  <div className="flex-1 flex min-h-0">
                    <div className="flex-1 min-w-0 flex flex-col bg-white">
                      <div className="h-[29px] shrink-0" />
                      <div className="h-px shrink-0 bg-[#4a90e2]" />
                      <div className="h-[28px] shrink-0 flex items-start pl-[257px]">
                        <div className="w-[24px] h-[24px] rounded-[3px] bg-[#4f9ae0] flex items-center justify-center"><VCIcon /></div>
                        <div className="ml-[18px] mt-[5px]"><Cube /></div>
                        <div className="ml-[24px] mt-[5px]"><ExitIcon /></div>
                      </div>
                      <div className="h-[2px] shrink-0 bg-[#7d7cef]" />
                      <div className="h-[18px] shrink-0 flex justify-end items-start pt-[4px] pr-[7px]">
                        <Svg w={25} h={9}><rect x=".5" y=".5" width="22.500" height="8" rx="1.500" fill="#555" stroke="#333" /><rect x="23.500" y="3" width="1.500" height="3" fill="#333" /></Svg>
                      </div>
                      <div className="ml-[13px] w-[568px] flex flex-col border border-[#9468f4] text-[17px] text-black leading-none">
                        <div className="h-[174px] flex items-center border-b border-[#7a50f0] -ml-px">Label</div>
                        <div className="h-[198px] flex items-center border-b border-[#7a50f0] -ml-px">Label</div>
                        <div className="h-[185px] flex items-center -ml-px">Label</div>
                      </div>
                      <div className="mt-[20px] h-px shrink-0 bg-[#4a90e2]" />
                      <div className="flex-1" />
                      <div className="h-[14px] shrink-0 border-y border-[#e4e4e4] bg-[#fafafa] flex items-center pl-[118px]">
                        <div className="w-[428px] h-[8px] rounded-full bg-[#c0c0c0]" />
                      </div>
                    </div>
                    <div className="w-[14px] shrink-0 bg-[#f7f7f7] border-l border-[#e6e6e6] pt-[33px] pl-[2px]">
                      <div className="w-[8px] h-[443px] rounded-full bg-[#c2c2c2]" />
                    </div>
                  </div>
                  <div className="h-[26px] shrink-0 flex items-center pl-[8px] pr-[7px] bg-gradient-to-b from-[#fdfdfd] to-[#f2f2f2]">
                    <Svg w={14} h={11}><rect x=".5" y=".5" width="13" height="10" stroke="#111" /><rect x="2" y="2" width="2" height="7" fill="#111" /></Svg>
                    <div className="ml-[224px] flex items-baseline text-[14px] text-[#1a1a1a]">
                      <span className="text-[11px] text-[#999] mr-[3px]">w</span>Any
                      <span className="text-[11px] text-[#999] ml-[5px] mr-[1px]">h</span>Any
                    </div>
                    <div className="ml-auto flex items-center gap-[11px]">
                      <Svg w={15} h={13}><path d="M.5 0v13M1 1.500h9v4H1zM1 7.500h13v4H1z" stroke="#222" /></Svg>
                      <Svg w={15} h={13}><path d="M.5 1v11M14.500 1v11M1 6.500h3M11 6.500h3M4.500 3h6.500v7H4.500z" stroke="#222" /></Svg>
                      <Svg w={15} h={13}><path d="M.5 1v11M14.500 1v11M1 6.500h2M12 6.500h2M5 9.500L7.500 4 10 9.500z" stroke="#222" /></Svg>
                    </div>
                  </div>
                </div>
              </div>
            </div>

            {/* inspector */}
            <div className="w-[260px] shrink-0 flex flex-col border-l border-[#b2b2b2] bg-[#f1f1f1]">
              <div className="h-[29px] shrink-0 flex items-center pl-[39px] border-y border-[#bcbcbc] border-t-[#c4c4c4] bg-[#f4f4f4]">
                {[
                  <Svg key="a" w={11} h={13}><path d="M.5.5h7l3 3v9H.5z" stroke="#666" /><path d="M7.500.5v3h3" stroke="#666" /></Svg>,
                  <Svg key="b" w={13} h={13}><circle cx="6.500" cy="6.500" r="6" stroke="#666" /><path d="M4.700 5a1.900 1.900 0 1 1 2.800 1.700c-.7.400-1 .800-1 1.600M6.500 9.500v1" stroke="#666" /></Svg>,
                  <Svg key="c" w={13} h={12}><rect x=".5" y=".5" width="12" height="11" stroke="#666" /><rect x="2.500" y="3" width="3.500" height="3.500" stroke="#666" /><path d="M7.500 3.500h3.500M7.500 6h3.500M2.500 8.500h8.500" stroke="#666" /></Svg>,
                  <Svg key="d" w={15} h={14}><path d="M0 0h15v6h-4l-3.500 8L4 6H0z" fill="#1e78f0" /><path d="M5 3l2.500 5L10 3z" fill="#fff" /></Svg>,
                  <Svg key="e" w={7} h={14}><rect x=".5" y=".5" width="6" height="13" stroke="#666" /><path d="M3 3h3M3 6h3M3 9h3" stroke="#666" /></Svg>,
                  <Svg key="f" w={13} h={13}><circle cx="6.500" cy="6.500" r="6" stroke="#666" /><path d="M3 6.500h7M7.500 4l2.500 2.500L7.500 9" stroke="#666" /></Svg>,
                ].map((ic, i) => <div key={i} className="w-[30px] flex justify-center">{ic}</div>)}
              </div>
              <div className="flex-1 flex min-h-0 text-[11px] tracking-[0.33px]">
                <div className="w-[244px] shrink-0 border-r border-transparent">
                  <div className="h-[18px] pl-[5px] flex items-center font-bold text-[#3a3a3a] tracking-normal">Simulated Metrics</div>
                  <div className="mt-[5px] flex flex-col gap-[4px]">
                    <Row label="Size"><Select v="Inferred" /></Row>
                    <Row label="Orientation"><Select v="Inferred" /></Row>
                    <Row label="Status Bar"><Select v="Inferred" /></Row>
                    <Row label="Top Bar"><Select v="Inferred" /></Row>
                    <Row label="Bottom Bar"><Select v="Inferred" /></Row>
                  </div>
                  <div className="mt-[15px] h-px bg-[#c0c0c0]" />
                  <div className="h-[18px] pl-[5px] flex items-center font-bold text-[#3a3a3a] tracking-normal">View Controller</div>
                  <Row label="Title" className="mt-[5px] !h-[19px]"><div className="w-[153px] h-[19px] bg-white border border-[#c6c6c6]" /></Row>
                  <Row className="mt-[2px]"><Check on label="Is Initial View Controller" /></Row>
                  <div className="mt-[2px] ml-[8px] w-[229px] h-px bg-[#d6d6d6]" />
                  <Row label="Layout" className="mt-[2px]"><Check on label="Adjust Scroll View Insets" /></Row>
                  <Row><Check label="Hide Bottom Bar on Push" /></Row>
                  <Row><Check on label="Resize View From NIB" /></Row>
                  <Row><Check label="Use Full Screen (Depre…" /></Row>
                  <Row label="Extend Edges"><Check on label="Under Top Bars" /></Row>
                  <Row><Check on label="Under Bottom Bars" /></Row>
                  <Row><Check label="Under Opaque Bars" /></Row>
                  <div className="mt-[2px] ml-[8px] w-[229px] h-px bg-[#d6d6d6]" />
                  <Row label="Transition Style" className="mt-[4px]"><Select v="Cover Vertical" /></Row>
                  <Row label="Presentation" className="mt-[4px]"><Select v="Full Screen" /></Row>
                  <Row className="mt-[2px]"><Check label="Defines Context" /></Row>
                  <Row><Check label="Provides Context" /></Row>
                  <Row label="Content Size"><Check tight label="Use Preferred Explicit Size" /></Row>
                  <Row className="mt-[2px]">
                    <div className="w-[60px] h-[18px] bg-white border border-[#cfcfcf] text-right pr-[2px] text-[#b5b5b5] leading-[18px]">600</div>
                    <div className="ml-[2px]"><Stepper /></div>
                    <div className="ml-[8px] w-[61px] h-[18px] bg-white border border-[#cfcfcf] text-right pr-[2px] text-[#b5b5b5] leading-[18px]">600</div>
                    <div className="ml-[2px]"><Stepper /></div>
                  </Row>
                </div>
                <div className="flex-1 border-l border-[#dcdcdc] pt-[3px] pl-[3px]">
                  <div className="w-[8px] h-[373px] rounded-full bg-[#c2c2c2]" />
                </div>
              </div>
              <div className="h-[26px] shrink-0 flex items-center pl-[8px] bg-gradient-to-b from-[#fdfdfd] to-[#f4f4f4]">
                <GridGlyph />
                <Filter className="ml-[8px] w-[226px]" />
              </div>
            </div>
          </div>
        </div>

        {/* right window behind */}
        <div className="w-[30px] shrink-0 flex flex-col bg-[#e6e6e6]">
          <div className="h-[39px] shrink-0 bg-gradient-to-b from-[#d8d8d8] to-[#c6c6c6] border-b border-[#a8a8a8] flex items-center">
            <div className="-ml-[1px] w-[16px] h-[22px] rounded-r-[4px] bg-[#efefef] flex items-center">
              <Svg w={13} h={14}><rect x="-4" y=".5" width="16" height="13" stroke="#6ea5ea" /><rect x="9" y="1" width="3" height="12" fill="#6ea5ea" /></Svg>
            </div>
          </div>
          <div className="h-[23px] shrink-0 bg-[#cfcfcf] flex items-center justify-center border-b border-[#b8b8b8] pl-[7px]">
            <Svg w={11} h={11}><path d="M5.500 0v11M0 5.500h11" stroke="#999" /></Svg>
          </div>
          <div className="flex-1 bg-[linear-gradient(90deg,#b0b0b0_0%,#d8d8d8_45%,#ececec_85%)]" />
        </div>
      </div>

      {/* dock row */}
      <div className="h-[67px] shrink-0 flex">
        <Mountain />
        <div className="w-[1350px] shrink-0 flex pl-[3px] bg-[#66667a] bg-[radial-gradient(ellipse_260px_90px_at_330px_70px,#8c8aa0,transparent),radial-gradient(ellipse_300px_90px_at_960px_70px,#8f90ad,transparent)]">
          <DockItem dot><Finder /></DockItem>
          <DockItem><Contacts /></DockItem>
          <DockItem><Launchpad /></DockItem>
          <DockItem><Calendar /></DockItem>
          <DockItem><Notes /></DockItem>
          <DockItem><Reminders /></DockItem>
          <DockItem><Maps /></DockItem>
          <DockItem><Photos /></DockItem>
          <DockItem><FaceTime /></DockItem>
          <DockItem badge="1"><AppStore /></DockItem>
          <DockItem><Unity /></DockItem>
          <DockItem dot><XcodeIcon /></DockItem>
          <DockItem dot><Atom /></DockItem>
          <DockItem><Sublime /></DockItem>
          <DockItem dot><Chrome /></DockItem>
          <DockItem><BlueApp /></DockItem>
          <DockItem><GridApp /></DockItem>
          <DockItem dot><Word /></DockItem>
          <DockItem dot><Terminal /></DockItem>
          <DockItem dot><TextEdit /></DockItem>
          <div className="w-[24px] h-[67px] shrink-0 flex justify-center pt-[8px] pb-[8px]"><div className="w-px h-full bg-[#3c3c48]" /></div>
          <DockItem><DriveDoc /></DockItem>
          <DockItem><FolderThumb /></DockItem>
          <DockItem><ShotThumb /></DockItem>
          <DockItem><Trash /></DockItem>
        </div>
        <Mountain flip />
      </div>

      {/* popup menu */}
      <div className="absolute left-[1120px] top-[575px] w-[314px] h-[236px] z-20 rounded-[5px] pt-[3px] text-[14px] tracking-[-0.05px] bg-[#f0f0ee] bg-[radial-gradient(ellipse_200px_120px_at_60px_110px,#f3f2e2,transparent)] shadow-[0_3px_14px_rgba(0,0,0,0.4)]">
        <div className="h-[18px] pl-[21px] leading-[18px] text-[#b6b6b6]">Selected Views</div>
        {[
          ["Update Frames", "⌥⌘="],
          ["Update Constraints", "⇧⌘="],
          ["Add Missing Constraints", ""],
          ["Reset to Suggested Constraints", "⌥⇧⌘="],
          ["Clear Constraints", ""],
        ].map(([l, s]) => (
          <div key={l} className="h-[18px] pl-[33px] pr-[14px] flex justify-between leading-[18px] text-[#b6b6b6]">
            <span>{l}</span>
            <span className="font-['DejaVu_Sans',sans-serif] text-[14px] tracking-[0.5px] text-[#adadad]">{s}</span>
          </div>
        ))}
        <div className="mt-[6px] h-[2px] bg-[#e2e2e0]" />
        <div className="mt-[4px] h-[18px] pl-[21px] leading-[18px] text-[#b6b6b6]">All Views</div>
        <div className="h-[18px] pl-[33px] leading-[18px] text-white bg-[#2a6ff5]">Update Frames</div>
        <div className="h-[18px] pl-[33px] leading-[18px] text-[#222]">Update Constraints</div>
        <div className="h-[18px] pl-[33px] leading-[18px] text-[#b6b6b6]">Add Missing Constraints</div>
        <div className="h-[18px] pl-[33px] leading-[18px] text-[#222]">Reset to Suggested Constraints</div>
        <div className="h-[18px] pl-[33px] leading-[18px] text-[#222]">Clear Constraints</div>
      </div>
    </div>
  );
}
